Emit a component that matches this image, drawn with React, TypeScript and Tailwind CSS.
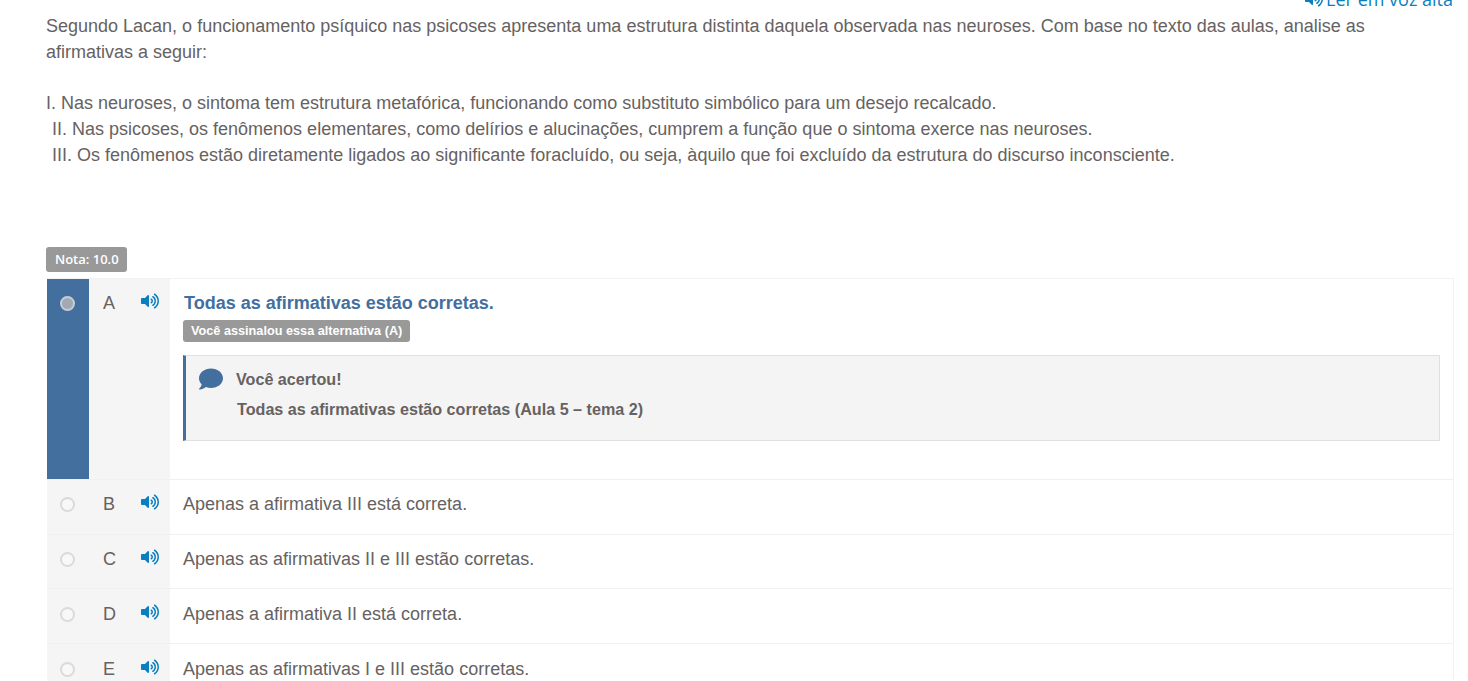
import { FaVolumeUp, FaComment } from "react-icons/fa";

const options = [
    { letter: "B", text: "Apenas a afirmativa III está correta.", height: "h-[55px]", top: "pt-[12px]", radio: "pt-[17px]" },
    { letter: "C", text: "Apenas as afirmativas II e III estão corretas.", height: "h-[54px]", top: "pt-[12px]", radio: "pt-[17px]" },
    { letter: "D", text: "Apenas a afirmativa II está correta.", height: "h-[55px]", top: "pt-[13px]", radio: "pt-[18px]" },
    { letter: "E", text: "Apenas as afirmativas I e III estão corretas.", height: "h-[55px]", top: "pt-[13px]", radio: "pt-[18px]" },
];

function Speaker() {
    return <FaVolumeUp className="w-[18px] h-[18px] mt-[1px] text-[#0a7fc0]" />;
}

export default function App() {
    return (
        <div className="h-[681px] w-[1468px] overflow-hidden bg-white text-[#666262] font-['Liberation_Sans',Arial,sans-serif]">
            {/* Ler em voz alta */}
            <div className="flex justify-end items-center gap-[3px] h-[22px] -mt-[12px] pr-[15px] text-[#0a7fc0] text-[18px] font-['Open_Sans',sans-serif]">
                <FaVolumeUp className="w-[18px] h-[18px]" />
                <span>Ler em voz alta</span>
            </div>

            {/* Enunciado */}
            <div className="pl-[46px] pr-[100px] pt-[3px] text-[18px] leading-[26px]">
                <p>Segundo Lacan, o funcionamento psíquico nas psicoses apresenta uma estrutura distinta daquela observada nas neuroses. Com base no texto das aulas, analise as afirmativas a seguir:</p>
                <p className="mt-[25px]">I. Nas neuroses, o sintoma tem estrutura metafórica, funcionando como substituto simbólico para um desejo recalcado.</p>
                <p className="pl-[6px]">II. Nas psicoses, os fenômenos elementares, como delírios e alucinações, cumprem a função que o sintoma exerce nas neuroses.</p>
                <p className="pl-[6px]">III. Os fenômenos estão diretamente ligados ao significante foracluído, ou seja, àquilo que foi excluído da estrutura do discurso inconsciente.</p>
            </div>

            {/* Nota */}
            <div className="ml-[46px] mt-[79px] w-fit h-[25px] pl-[9px] pr-[8px] flex items-center rounded-[3px] bg-[#999999] text-white text-[13px] font-semibold font-['Open_Sans',sans-serif]">
                Nota: 10.0
            </div>

            {/* Alternativas */}
            <div className="ml-[47px] mt-[6px] w-[1407px] border-t border-r border-[#f3f3f3]">
                <div className="flex h-[201px] border-b border-[#f0f0f0]">
                    <div className="w-[42px] bg-[#436f9f] flex justify-center pt-[17px] pr-[2px]">
                        <div className="w-[15px] h-[15px] rounded-full bg-[#a3a9b1] border-[2px] border-[#c6cdd8]" />
                    </div>
                    <div className="w-[81px] bg-[#f5f5f5] flex items-start pt-[12px] pl-[14px] text-[18px] leading-[24px]">
                        <span className="w-[38px]">A</span>
                        <Speaker />
                    </div>
                    <div className="flex-1 pl-[13px] pr-[13px] pt-[12px]">
                        <div className="pl-[1px] text-[18px] leading-[24px] font-bold text-[#436f9f]">Todas as afirmativas estão corretas.</div>
                        <div className="mt-[5px] w-fit h-[22px] px-[8px] pt-[1px] flex items-center rounded-[3px] bg-[#999999] text-white text-[12.7px] font-bold">
                            Você assinalou essa alternativa (A)
                        </div>
                        <div className="mt-[13px] h-[86px] border border-[#e0e0e0] border-l-[3px] border-l-[#436f9f] bg-[#f4f4f4] pl-[12px] pt-[11px]">
                            <div className="flex items-center gap-[12px] h-[24px]">
                                <FaComment className="w-[26px] h-[24px] text-[#436f9f]" />
                                <span className="text-[16.15px] font-bold">Você acertou!</span>
                            </div>
                            <div className="mt-[6px] pl-[39px] text-[16.15px] leading-[24px] font-bold">
                                Todas as afirmativas estão corretas (Aula 5 – tema 2)
                            </div>
                        </div>
                    </div>
                </div>
                {options.map((opt) => (
                    <div key={opt.letter} className={`flex ${opt.height} border-b border-[#f0f0f0]`}>
                        <div className={`w-[42px] bg-[#f5f5f5] flex justify-center pr-[2px] ${opt.radio}`}>
                            <div className="w-[15px] h-[15px] rounded-full bg-[#f8f8f8] border-2 border-[#dadada]" />
                        </div>
                        <div className={`w-[81px] bg-[#f5f5f5] flex items-start pl-[14px] text-[18px] leading-[24px] ${opt.top}`}>
                            <span className="w-[38px]">{opt.letter}</span>
                            <Speaker />
                        </div>
                        <div className={`flex-1 pl-[13px] text-[18px] leading-[24px] ${opt.top}`}>{opt.text}</div>
                    </div>
                ))}
            </div>
        </div>
    );
}
